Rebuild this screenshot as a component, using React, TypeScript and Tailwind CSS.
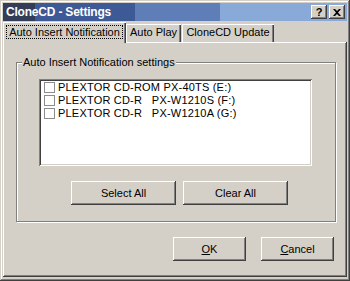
import React from "react";

const raised =
  "shadow-[inset_-1px_-1px_#404040,inset_1px_1px_#ffffff,inset_-2px_-2px_#808080]";

const drives = [
  "PLEXTOR CD-ROM PX-40TS (E:)",
  "PLEXTOR CD-R   PX-W1210S (F:)",
  "PLEXTOR CD-R   PX-W1210A (G:)",
];

function TitleButton({ children }: { children: React.ReactNode }) {
  return (
    <div
      className={`flex h-[14px] w-[16px] items-center justify-center bg-[#d4d0c8] text-[11px] font-bold leading-none text-black ${raised}`}
    >
      {children}
    </div>
  );
}

function Button({ children, className }: { children: React.ReactNode; className: string }) {
  return (
    <button
      type="button"
      className={`flex h-[24px] items-center justify-center bg-[#d4d0c8] text-[11px] text-black ${raised} ${className}`}
    >
      {children}
    </button>
  );
}

export default function App() {
  return (
    <div className="h-[281px] w-[350px] bg-[#d4d0c8] font-['Liberation_Sans',Arial,sans-serif] text-black">
      <div className="flex h-full flex-col p-[3px] pb-[4px] shadow-[inset_-1px_-1px_#404040,inset_1px_1px_#d4d0c8,inset_-2px_-2px_#808080,inset_2px_2px_#ffffff]">
        {/* title bar */}
        <div className="flex h-[18px] shrink-0 items-center justify-between bg-[linear-gradient(to_right,#333d58_0px,#333d58_32px,#3d5996_32px,#3d5996_132px,#5f7eb7_132px,#5f7eb7_217px,#89a9d9_217px)] pl-[3px] pr-[2px]">
          <span className="text-[12px] font-bold tracking-[-0.2px] text-white">CloneCD - Settings</span>
          <div className="flex gap-[2px]">
            <TitleButton>?</TitleButton>
            <TitleButton>
              <svg width="8" height="7" viewBox="0 0 8 7">
                <path d="M0 0h2l2 2 2-2h2L5 3.5 8 7H6L4 5 2 7H0l3-3.5z" fill="#000" />
              </svg>
            </TitleButton>
          </div>
        </div>

        {/* tabs */}
        <div className="relative z-10 mt-[1px] flex h-[20px] shrink-0 items-end text-[11px]">
          <div className="-mb-px flex h-[21px] w-[123px] items-start justify-center bg-[#d4d0c8] pt-[3px] shadow-[inset_1px_1px_#ffffff,inset_-1px_0_#404040,inset_-2px_0_#808080]">
            <span className="border border-dotted border-black px-[2px] leading-[12px]">
              Auto Insert Notification
            </span>
          </div>
          <div className="flex h-[18px] w-[55px] items-center justify-center pb-[1px] shadow-[inset_1px_1px_#ffffff,inset_-1px_0_#404040,inset_-2px_0_#808080]">
            Auto Play
          </div>
          <div className="ml-[1px] flex h-[18px] w-[92px] items-center justify-center pb-[1px] shadow-[inset_1px_1px_#ffffff,inset_-1px_0_#404040,inset_-2px_0_#808080]">
            CloneCD Update
          </div>
        </div>

        {/* tab panel */}
        <div className={`flex flex-1 flex-col pl-[13px] pr-[11px] pt-[20px] ${raised}`}>
          {/* group box */}
          <div className="relative h-[160px] border border-[#808080] shadow-[1px_1px_#ffffff,inset_1px_1px_#ffffff]">
            <span className="absolute left-[5px] top-[-7px] bg-[#d4d0c8] px-[1px] text-[11px] leading-[12px]">
              Auto Insert Notification settings
            </span>
            <div className="ml-[22px] mt-[16px] h-[87px] w-[273px] bg-white p-[2px] shadow-[inset_1px_1px_#808080,inset_-1px_-1px_#ffffff,inset_2px_2px_#404040,inset_-2px_-2px_#d4d0c8]">
              <div className="flex flex-col pl-[3px]">
                {drives.map((d) => (
                  <div key={d} className="flex h-[13px] items-center gap-[3px]">
                    <div className="h-[11px] w-[11px] shrink-0 border border-[#8c8c8c] bg-white" />
                    <span className="whitespace-pre text-[11px] leading-[13px] tracking-[0.2px]">{d}</span>
                  </div>
                ))}
              </div>
            </div>
            <div className="mt-[15px] flex gap-[7px] pl-[54px]">
              <Button className="w-[105px]">Select All</Button>
              <Button className="w-[105px]">Clear All</Button>
            </div>
          </div>

          <div className="mt-[15px] flex justify-end gap-[15px] pr-[2px]">
            <Button className="w-[73px]">
              <span>
                <span className="underline underline-offset-1">O</span>K
              </span>
            </Button>
            <Button className="w-[73px]">
              <span>
                <span className="underline underline-offset-1">C</span>ancel
              </span>
            </Button>
          </div>
        </div>
      </div>
    </div>
  );
}
